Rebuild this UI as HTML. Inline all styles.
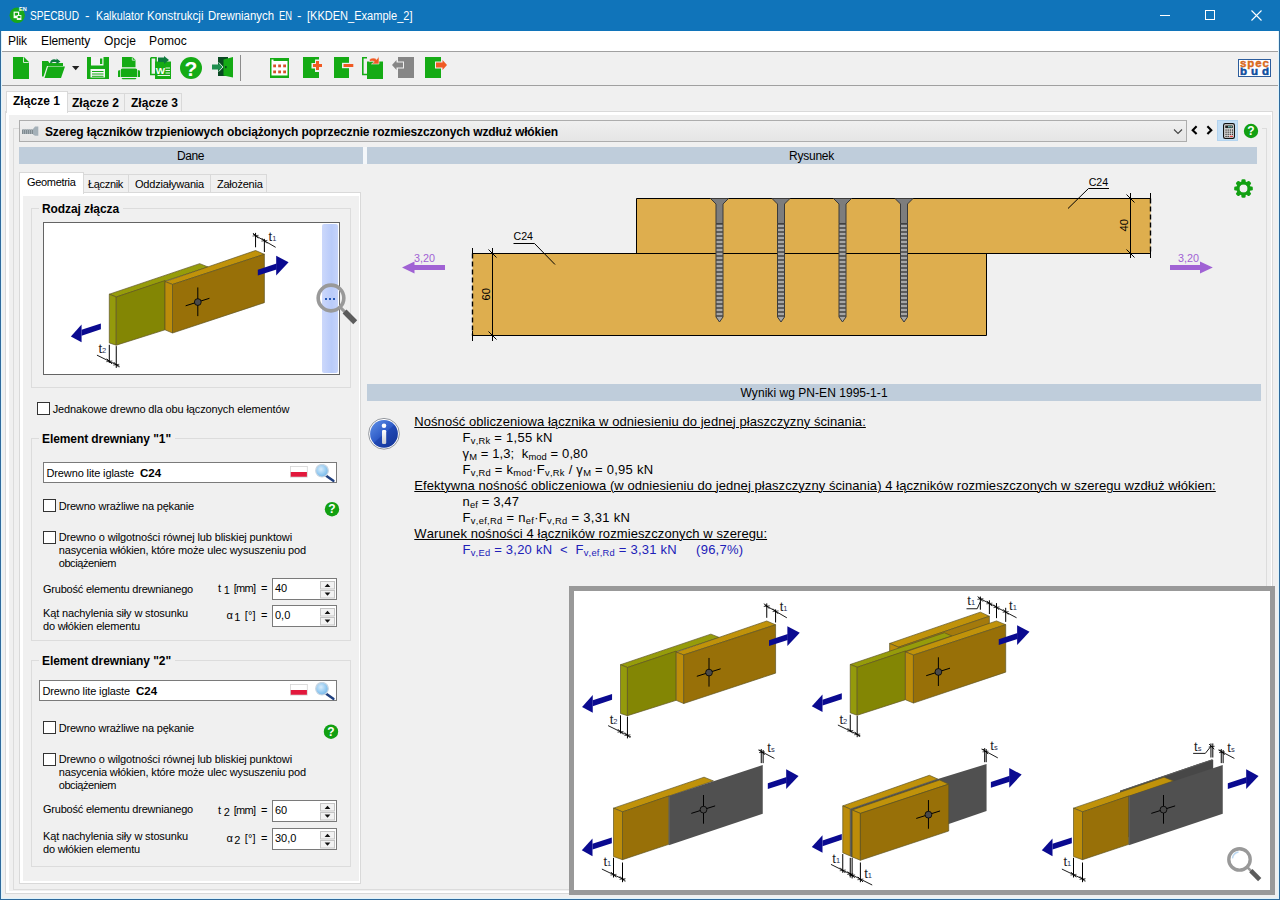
<!DOCTYPE html>
<html lang="pl"><head><meta charset="utf-8"><title>SPECBUD - Kalkulator Konstrukcji Drewnianych EN</title>
<style>
html,body{margin:0;padding:0;}
body{width:1280px;height:900px;overflow:hidden;background:#f0f0f0;position:relative;
 font-family:"Liberation Sans",sans-serif;font-size:11px;color:#000;font-kerning:none;}
.r{position:absolute;box-sizing:border-box;display:block;}
.t{position:absolute;white-space:pre;}
sub.s{font-size:72%;vertical-align:baseline;position:relative;top:2px;line-height:0;}
</style></head>
<body>
<div class="r" style="left:0px;top:0px;width:1280px;height:31px;background:#1074ba;"></div>
<span class="t " style="left:30px;top:8.00px;font-size:12px;line-height:16px;color:#fff;transform:scaleX(0.8446);transform-origin:0 0;">SPECBUD</span>
<span class="t " style="left:84.5px;top:8.00px;font-size:12px;line-height:16px;color:#fff;transform:scaleX(1.1262);transform-origin:0 0;">-</span>
<span class="t " style="left:95.5px;top:8.00px;font-size:12px;line-height:16px;color:#fff;transform:scaleX(0.8902);transform-origin:0 0;">Kalkulator</span>
<span class="t " style="left:147px;top:8.00px;font-size:12px;line-height:16px;color:#fff;transform:scaleX(0.9628);transform-origin:0 0;">Konstrukcji</span>
<span class="t " style="left:208px;top:8.00px;font-size:12px;line-height:16px;color:#fff;transform:scaleX(0.9516);transform-origin:0 0;">Drewnianych</span>
<span class="t " style="left:278.5px;top:8.00px;font-size:12px;line-height:16px;color:#fff;transform:scaleX(0.7798);transform-origin:0 0;">EN</span>
<span class="t " style="left:297px;top:8.00px;font-size:12px;line-height:16px;color:#fff;transform:scaleX(1.1262);transform-origin:0 0;">-</span>
<span class="t " style="left:307px;top:8.00px;font-size:12px;line-height:16px;color:#fff;transform:scaleX(0.9196);transform-origin:0 0;">[KKDEN_Example_2]</span>
<svg class="r" style="left:1150px;top:0px;" width="130" height="31" viewBox="0 0 130 31"><g stroke="#fff" stroke-width="1" fill="none" shape-rendering="crispEdges"><path d="M10 15.5H20"/><rect x="55.5" y="10.5" width="9" height="9"/></g><path d="M101.5 10.5l10 10M111.5 10.5l-10 10" stroke="#fff" stroke-width="1.1" fill="none"/></svg>
<div class="r" style="left:1px;top:31px;width:1278px;height:20px;background:#fff;"></div>
<span class="t " style="left:8px;top:33.00px;font-size:12px;line-height:16px;letter-spacing:-0.084px;">Plik</span>
<span class="t " style="left:41px;top:33.00px;font-size:12px;line-height:16px;letter-spacing:-0.127px;">Elementy</span>
<span class="t " style="left:104px;top:33.00px;font-size:12px;line-height:16px;letter-spacing:0.131px;">Opcje</span>
<span class="t " style="left:149px;top:33.00px;font-size:12px;line-height:16px;letter-spacing:0.131px;">Pomoc</span>
<div class="r" style="left:1px;top:51px;width:1278px;height:1px;background:#a0a0a0;"></div>
<div class="r" style="left:1px;top:85px;width:1278px;height:1px;background:#a0a0a0;"></div>
<div class="r" style="left:240px;top:55px;width:1px;height:26px;background:#8c8c8c;"></div>
<div class="r" style="left:5px;top:111px;width:1268px;height:783px;background:#fff;border:1px solid #d9d9d9;"></div>
<div class="r" style="left:9px;top:115px;width:1262px;height:776px;background:#f0f0f0;"></div>
<div class="r" style="left:67px;top:93px;width:58px;height:19px;background:#f0f0f0;border:1px solid #d9d9d9;"></div>
<div class="r" style="left:124px;top:93px;width:58px;height:19px;background:#f0f0f0;border:1px solid #d9d9d9;"></div>
<div class="r" style="left:6px;top:91px;width:62px;height:22px;background:#fff;border:1px solid #d9d9d9;border-bottom:none;"></div>
<span class="t " style="left:13px;top:93.00px;font-size:12px;line-height:16px;font-weight:bold;letter-spacing:0.039px;">Złącze 1</span>
<span class="t " style="left:72px;top:95.00px;font-size:12px;line-height:16px;font-weight:bold;letter-spacing:0.039px;">Złącze 2</span>
<span class="t " style="left:131px;top:95.00px;font-size:12px;line-height:16px;font-weight:bold;letter-spacing:0.039px;">Złącze 3</span>
<div class="r" style="left:13px;top:128px;width:1254px;height:762px;border:1px solid #dcdcdc;"></div>
<svg class="r" style="left:8px;top:5px;" width="20" height="20" viewBox="0 0 20 20"><circle cx="9.2" cy="10.3" r="7.7" fill="#18a818"/><rect x="5.6" y="6.6" width="5.6" height="6.6" fill="#fff"/><rect x="6.8" y="7.8" width="3.2" height="2.8" fill="#18a818"/><rect x="8.8" y="10" width="4.6" height="5" fill="#e9f6e9"/><rect x="9.8" y="11" width="2.6" height="2" fill="#18a818"/><text x="11" y="6" font-family="Liberation Sans,sans-serif" font-size="5.5" font-weight="bold" fill="#fff">EN</text></svg>
<svg class="r" style="left:0px;top:52px;" width="460" height="33" viewBox="0 52 460 33"><path d="M13 57H24L29 62V79H13Z" fill="#15ab15"/><path d="M23.5 57.3V62.5H28.7" fill="none" stroke="#e4f4e4" stroke-width="0.9"/><path d="M42 61H48L49.5 63H63V66H47L43.5 76.5H42Z" fill="#15ab15"/><path d="M48 66.5H65L61 78H44.5Z" fill="#15ab15"/><path d="M50 62.5C51 59.5 54 58.5 56.5 60V58.5L60.5 61.5L56.5 64V62.5C54.5 61.7 52.5 62 51 63.5Z" fill="#0d7a3c"/><path d="M72 66H79.4L75.7 70.2Z" fill="#222"/><path d="M87 57H109V79H87Z" fill="#15ab15"/><rect x="91" y="57" width="12.5" height="8.5" fill="#f4f4f4"/><rect x="100" y="58.5" width="2.3" height="5.5" fill="#15ab15"/><rect x="90.5" y="69" width="14.5" height="8.5" fill="#f4f4f4"/><path d="M92 71.5H103.5M92 74H103.5M92 76.3H103.5" stroke="#15ab15" stroke-width="1"/><path d="M122 57H132.5L135.5 60V67.3H122Z" fill="#15ab15"/><path d="M132.3 57.3V60.2H135.3" fill="none" stroke="#e4f4e4" stroke-width="0.8"/><path d="M122.5 68.6H135.5Q137.3 68.6 137.3 70.5V77H120.700V70.500Q120.700 68.600 122.500 68.600Z" fill="#15ab15"/><path d="M118 71.500Q118 70.300 119.200 70.300H120V77H118ZM138 70.300H138.800Q140 70.300 140 71.500V77H138Z" fill="#15ab15"/><path d="M121.500 77.900H136.500L135.500 79.300H122.500Z" fill="#15ab15"/><path d="M150.800 57.800H156V65M150.800 57.800V74.500H155" fill="none" stroke="#15ab15" stroke-width="1.6"/><rect x="155" y="61.500" width="16" height="17.500" fill="#15ab15"/><path d="M158 57.500H164V56L169 60L164 64V62H158Z" fill="#0d7a3c" transform="rotate(0)"/><path d="M157.5 75.500H170M165.500 68H170M165.500 70.500H170M165.500 73H170" stroke="#e8f6e8" stroke-width="1"/><text x="155.800" y="74.300" font-family="Liberation Sans,sans-serif" font-weight="bold" font-size="9.800" fill="#fff">W</text><circle cx="191" cy="68" r="11" fill="#15ab15"/><text x="191" y="75.800" font-family="Liberation Sans,sans-serif" font-weight="bold" font-size="21" fill="#fff" text-anchor="middle">?</text><rect x="218" y="57" width="10" height="19" fill="#0a4a22"/><path d="M223.500 59.500L233 57V77.500L223.500 75.500Z" fill="#15ab15"/><path d="M212 64.500H218.500V62L223.500 67L218.500 72V69.500H212Z" fill="#1f8f4f"/><path d="M218.800 62.500L223 67L218.800 71.500" fill="none" stroke="#e8f3e8" stroke-width="0.9"/><rect x="225" y="66" width="1.600" height="2.200" fill="#0a4a22"/><rect x="270" y="58" width="19" height="20" fill="#15ab15"/><path d="M271.500 59.500H273.500V61H287.500V75.500H271.500Z" fill="#fff"/><rect x="273.2" y="64.5" width="2.800" height="2.800" fill="#d8502a"/><rect x="278.2" y="64.5" width="2.800" height="2.800" fill="#d8502a"/><rect x="283.2" y="64.5" width="2.800" height="2.800" fill="#d8502a"/><rect x="273.2" y="70.5" width="2.800" height="2.800" fill="#d8502a"/><rect x="278.2" y="70.5" width="2.800" height="2.800" fill="#d8502a"/><rect x="283.2" y="70.5" width="2.800" height="2.800" fill="#d8502a"/><rect x="303" y="57" width="16" height="21" fill="#15ab15"/><path d="M311.500 63H315V59.500H320.500V63H324V68.500H320.500V72H315V68.500H311.500Z" fill="#f0f0f0"/><path d="M313 64H316V61H319V64H322V67H319V70H316V67H313Z" fill="#f05a23"/><rect x="334" y="57" width="15" height="21" fill="#15ab15"/><rect x="342" y="62.800" width="12" height="5.400" fill="#f0f0f0"/><rect x="343.500" y="64" width="9.800" height="3" fill="#f05a23"/><path d="M367 57.800H362.800V74.500H367" fill="none" stroke="#15ab15" stroke-width="1.600"/><rect x="367" y="61.500" width="16" height="17.500" fill="#15ab15"/><path d="M368 61.500V56.500H380V66H372Z" fill="#f0f0f0" opacity="0"/><path d="M369.500 59.500C372 57.500 375 57.800 376.500 59.500L379 56.500V64H371.500L374.300 61.800C373 60.800 371.500 60.800 369.500 61.800Z" fill="#f05a23" stroke="#f0f0f0" stroke-width="0.600"/><rect x="398" y="57" width="16" height="21" fill="#868686"/><path d="M391 65L397 58V61.500H404V68.500H397V72Z" fill="#f0f0f0"/><path d="M392 65L396.500 60V62.500H403V67.500H396.500V70Z" fill="#868686"/><rect x="425" y="57" width="16" height="21" fill="#15ab15"/><path d="M435 61.500H442V58L448 65L442 72V68.500H435Z" fill="#f0f0f0"/><path d="M436 62.500H442.500V60L447 65L442.500 70V67.500H436Z" fill="#f05a23"/></svg>
<svg class="r" style="left:1238px;top:59px;" width="33" height="18" viewBox="0 0 33 18"><rect x="0.5" y="0.5" width="32" height="17" fill="#fff" stroke="#2c5c9c"/><defs><clipPath id="lc"><rect x="0" y="8.6" width="33" height="8"/></clipPath></defs><g clip-path="url(#lc)"><text x="2" y="15.700" font-family="Liberation Sans,sans-serif" font-weight="bold" font-size="11.5" fill="#0d4f9e" stroke="#0d4f9e" stroke-width="0.500" textLength="29" lengthAdjust="spacing">bud</text></g><text x="2" y="8.400" font-family="Liberation Sans,sans-serif" font-weight="bold" font-size="11.5" fill="#e8701c" stroke="#c8601c" stroke-width="0.400" textLength="29" lengthAdjust="spacing">spec</text></svg>
<div class="r" style="left:19px;top:119px;width:1243px;height:24px;background:#f0f0f0;"></div>
<div class="r" style="left:19px;top:120px;width:1168px;height:22px;border:1px solid #adadad;background:linear-gradient(#f0f0f0,#e5e5e5);"></div>
<span class="t " style="left:45px;top:124.00px;font-size:12px;line-height:16px;font-weight:bold;letter-spacing:-0.130px;">Szereg łączników trzpieniowych obciążonych poprzecznie rozmieszczonych wzdłuż włókien</span>
<svg class="r" style="left:22px;top:125px;" width="18" height="12" viewBox="0 0 18 12"><rect x="0" y="4.5" width="11.5" height="4.500" fill="#7f8a90"/><path d="M1.5 4.500v4.500M3.500 4.500v4.500M5.500 4.500v4.500M7.500 4.500v4.500M9.500 4.500v4.500" stroke="#a3adb3" stroke-width="1"/><path d="M11 4L13 1.600H16.300V10.800H13L11 9.500Z" fill="#a4b0b8"/></svg>
<svg class="r" style="left:1172px;top:127px;" width="12" height="10" viewBox="0 0 12 10"><path d="M2 2.5L6 6.5L10 2.5" fill="none" stroke="#444" stroke-width="1.1"/></svg>
<div class="r" style="left:19px;top:147px;width:344px;height:17px;background:#bfcddb;"></div>
<div class="r" style="left:363px;top:147px;width:4px;height:17px;background:#f4f7fa;"></div>
<div class="r" style="left:367px;top:147px;width:890px;height:17px;background:#bfcddb;"></div>
<span class="t " style="left:177px;top:148.00px;font-size:12px;line-height:16px;letter-spacing:-0.421px;">Dane</span>
<span class="t " style="left:789px;top:148.00px;font-size:12px;line-height:16px;letter-spacing:-0.241px;">Rysunek</span>
<div class="r" style="left:19px;top:192px;width:342px;height:692px;background:#fff;border:1px solid #d9d9d9;"></div>
<div class="r" style="left:23px;top:196px;width:336px;height:685px;background:#f0f0f0;"></div>
<div class="r" style="left:83px;top:174px;width:46px;height:19px;background:#f0f0f0;border:1px solid #d9d9d9;"></div>
<div class="r" style="left:128px;top:174px;width:83px;height:19px;background:#f0f0f0;border:1px solid #d9d9d9;"></div>
<div class="r" style="left:210px;top:174px;width:57px;height:19px;background:#f0f0f0;border:1px solid #d9d9d9;"></div>
<div class="r" style="left:19px;top:172px;width:65px;height:22px;background:#fff;border:1px solid #d9d9d9;border-bottom:none;"></div>
<span class="t " style="left:27px;top:175.00px;font-size:11px;line-height:14px;letter-spacing:-0.317px;">Geometria</span>
<span class="t " style="left:88px;top:177.00px;font-size:11px;line-height:14px;letter-spacing:-0.328px;">Łącznik</span>
<span class="t " style="left:135px;top:177.00px;font-size:11px;line-height:14px;letter-spacing:-0.195px;">Oddziaływania</span>
<span class="t " style="left:217px;top:177.00px;font-size:11px;line-height:14px;letter-spacing:-0.244px;">Założenia</span>
<div class="r" style="left:31px;top:208px;width:320px;height:180px;border:1px solid #dcdcdc;"></div>
<div class="r" style="left:39px;top:202px;width:84px;height:14px;background:#f0f0f0;"></div>
<span class="t " style="left:42px;top:201.00px;font-size:12px;line-height:16px;font-weight:bold;letter-spacing:-0.078px;">Rodzaj złącza</span>
<div class="r" style="left:43px;top:222px;width:297px;height:153px;background:#fff;border:1px solid #646464;"></div>
<div class="r" style="left:322px;top:224px;width:16px;height:149px;background:linear-gradient(90deg,#ccd8fb,#b9cbfa 60%,#c6d4fb);border-radius:2px;"></div>
<div class="r" style="left:37px;top:402px;width:13px;height:13px;background:#fff;border:1px solid #333;"></div>
<span class="t " style="left:52.7px;top:402.00px;font-size:11px;line-height:14px;letter-spacing:-0.128px;">Jednakowe drewno dla obu łączonych elementów</span>
<div class="r" style="left:31px;top:438px;width:320px;height:203px;border:1px solid #dcdcdc;"></div>
<div class="r" style="left:39px;top:432px;width:136px;height:14px;background:#f0f0f0;"></div>
<span class="t " style="left:42px;top:431.00px;font-size:12px;line-height:16px;font-weight:bold;letter-spacing:-0.083px;">Element drewniany &quot;1&quot;</span>
<div class="r" style="left:43px;top:462px;width:294px;height:21px;background:#fff;border:1px solid #7a7a7a;"></div>
<span class="t " style="left:46.5px;top:466.00px;font-size:11px;line-height:14px;letter-spacing:-0.125px;">Drewno lite iglaste</span>
<span class="t " style="left:140px;top:466.00px;font-size:11.5px;line-height:14px;font-weight:bold;letter-spacing:-0.032px;">C24</span>
<svg class="r" style="left:290px;top:466px;" width="18" height="12" viewBox="0 0 18 12"><rect x="0" y="0" width="17.7" height="11.5" fill="#d4d4d4"/><rect x="0.8" y="0.8" width="16.100" height="5.200" fill="#fff"/><rect x="0.800" y="6" width="16.100" height="4.700" fill="#e2183c"/></svg>
<svg class="r" style="left:314px;top:464px;" width="21" height="19" viewBox="0 0 21 19"><defs><radialGradient id="mg1" cx="42%" cy="38%" r="65%"><stop offset="0" stop-color="#d8ecfb"/><stop offset="0.7" stop-color="#8cc6f0"/><stop offset="1" stop-color="#7ab4e4"/></radialGradient></defs><path d="M12.5 12L19.3 16.800" stroke="#1f3f7f" stroke-width="2.600" stroke-linecap="round"/><circle cx="8" cy="6.700" r="6.300" fill="url(#mg1)" stroke="#c9d6e2" stroke-width="1.200"/></svg>
<div class="r" style="left:43px;top:499px;width:13px;height:13px;background:#fff;border:1px solid #333;"></div>
<span class="t " style="left:58.7px;top:499.00px;font-size:11px;line-height:14px;letter-spacing:-0.181px;">Drewno wrażliwe na pękanie</span>
<svg class="r" style="left:323px;top:500px;" width="18" height="18" viewBox="0 0 18 18"><circle cx="9" cy="9.199999999999989" r="7.2" fill="#12a012"/><text x="9" y="13.399999999999988" font-family="Liberation Sans,sans-serif" font-weight="bold" font-size="12" fill="#fff" text-anchor="middle">?</text></svg>
<div class="r" style="left:43px;top:531px;width:13px;height:13px;background:#fff;border:1px solid #333;"></div>
<span class="t " style="left:58.7px;top:530.00px;font-size:11px;line-height:14px;letter-spacing:-0.130px;">Drewno o wilgotności równej lub bliskiej punktowi</span>
<span class="t " style="left:58.7px;top:543.00px;font-size:11px;line-height:14px;letter-spacing:-0.144px;">nasycenia włókien, które może ulec wysuszeniu pod</span>
<span class="t " style="left:58.7px;top:556.00px;font-size:11px;line-height:14px;letter-spacing:-0.405px;">obciążeniem</span>
<span class="t " style="left:43px;top:582.00px;font-size:11px;line-height:14px;letter-spacing:-0.211px;">Grubość elementu drewnianego</span>
<span class="t " style="left:218px;top:581.00px;font-size:11px;line-height:14px;">t</span>
<span class="t " style="left:223.7px;top:583.00px;font-size:11px;line-height:14px;">1</span>
<span class="t " style="left:233.7px;top:581.00px;font-size:11px;line-height:14px;letter-spacing:-0.684px;">[mm]</span>
<span class="t " style="left:261px;top:581.00px;font-size:11px;line-height:14px;">=</span>
<div class="r" style="left:272px;top:578px;width:65px;height:22px;background:#fff;border:1px solid #7a7a7a;"></div>
<span class="t " style="left:275px;top:581.00px;font-size:11px;line-height:14px;">40</span>
<svg class="r" style="left:320px;top:581px;" width="15" height="18" viewBox="0 0 15 18"><rect x="0.5" y="0.5" width="14" height="7.5" fill="#f2f2f2" stroke="#c4c4c4"/><rect x="0.5" y="9.5" width="14" height="7.5" fill="#f2f2f2" stroke="#c4c4c4"/><path d="M4.6 6L7.5 2.8L10.4 6Z" fill="#111"/><path d="M4.6 11.6L7.5 14.8L10.4 11.6Z" fill="#111"/></svg>
<span class="t " style="left:43px;top:606.00px;font-size:11px;line-height:14px;letter-spacing:-0.139px;">Kąt nachylenia siły w stosunku</span>
<span class="t " style="left:43px;top:619.00px;font-size:11px;line-height:14px;letter-spacing:-0.172px;">do włókien elementu</span>
<span class="t " style="left:226.5px;top:608.00px;font-size:11px;line-height:14px;">α</span>
<span class="t " style="left:234.3px;top:610.00px;font-size:11px;line-height:14px;">1</span>
<span class="t " style="left:244.8px;top:608.00px;font-size:11px;line-height:14px;letter-spacing:0.063px;">[°]</span>
<span class="t " style="left:261px;top:608.00px;font-size:11px;line-height:14px;">=</span>
<div class="r" style="left:272px;top:605px;width:65px;height:22px;background:#fff;border:1px solid #7a7a7a;"></div>
<span class="t " style="left:275px;top:608.00px;font-size:11px;line-height:14px;">0,0</span>
<svg class="r" style="left:320px;top:608px;" width="15" height="18" viewBox="0 0 15 18"><rect x="0.5" y="0.5" width="14" height="7.5" fill="#f2f2f2" stroke="#c4c4c4"/><rect x="0.5" y="9.5" width="14" height="7.5" fill="#f2f2f2" stroke="#c4c4c4"/><path d="M4.6 6L7.5 2.8L10.4 6Z" fill="#111"/><path d="M4.6 11.6L7.5 14.8L10.4 11.6Z" fill="#111"/></svg>
<div class="r" style="left:31px;top:660px;width:320px;height:207px;border:1px solid #dcdcdc;"></div>
<div class="r" style="left:39px;top:654px;width:136px;height:14px;background:#f0f0f0;"></div>
<span class="t " style="left:42px;top:653.00px;font-size:12px;line-height:16px;font-weight:bold;letter-spacing:-0.083px;">Element drewniany &quot;2&quot;</span>
<div class="r" style="left:39px;top:680px;width:298px;height:21px;background:#fff;border:1px solid #7a7a7a;"></div>
<span class="t " style="left:42.5px;top:684.00px;font-size:11px;line-height:14px;letter-spacing:-0.125px;">Drewno lite iglaste</span>
<span class="t " style="left:136px;top:684.00px;font-size:11.5px;line-height:14px;font-weight:bold;letter-spacing:-0.032px;">C24</span>
<svg class="r" style="left:290px;top:684px;" width="18" height="12" viewBox="0 0 18 12"><rect x="0" y="0" width="17.7" height="11.5" fill="#d4d4d4"/><rect x="0.8" y="0.8" width="16.100" height="5.200" fill="#fff"/><rect x="0.800" y="6" width="16.100" height="4.700" fill="#e2183c"/></svg>
<svg class="r" style="left:314px;top:682px;" width="21" height="19" viewBox="0 0 21 19"><defs><radialGradient id="mg2" cx="42%" cy="38%" r="65%"><stop offset="0" stop-color="#d8ecfb"/><stop offset="0.7" stop-color="#8cc6f0"/><stop offset="1" stop-color="#7ab4e4"/></radialGradient></defs><path d="M12.5 12L19.3 16.800" stroke="#1f3f7f" stroke-width="2.600" stroke-linecap="round"/><circle cx="8" cy="6.700" r="6.300" fill="url(#mg2)" stroke="#c9d6e2" stroke-width="1.200"/></svg>
<div class="r" style="left:43px;top:721px;width:13px;height:13px;background:#fff;border:1px solid #333;"></div>
<span class="t " style="left:58.7px;top:721.00px;font-size:11px;line-height:14px;letter-spacing:-0.181px;">Drewno wrażliwe na pękanie</span>
<svg class="r" style="left:322px;top:723px;" width="18" height="18" viewBox="0 0 18 18"><circle cx="9" cy="8.700000000000045" r="7.2" fill="#12a012"/><text x="9" y="12.900000000000045" font-family="Liberation Sans,sans-serif" font-weight="bold" font-size="12" fill="#fff" text-anchor="middle">?</text></svg>
<div class="r" style="left:43px;top:753px;width:13px;height:13px;background:#fff;border:1px solid #333;"></div>
<span class="t " style="left:58.7px;top:752.00px;font-size:11px;line-height:14px;letter-spacing:-0.130px;">Drewno o wilgotności równej lub bliskiej punktowi</span>
<span class="t " style="left:58.7px;top:765.00px;font-size:11px;line-height:14px;letter-spacing:-0.144px;">nasycenia włókien, które może ulec wysuszeniu pod</span>
<span class="t " style="left:58.7px;top:778.00px;font-size:11px;line-height:14px;letter-spacing:-0.405px;">obciążeniem</span>
<span class="t " style="left:43px;top:802.00px;font-size:11px;line-height:14px;letter-spacing:-0.211px;">Grubość elementu drewnianego</span>
<span class="t " style="left:218px;top:803.00px;font-size:11px;line-height:14px;">t</span>
<span class="t " style="left:223.7px;top:805.00px;font-size:11px;line-height:14px;">2</span>
<span class="t " style="left:233.7px;top:803.00px;font-size:11px;line-height:14px;letter-spacing:-0.684px;">[mm]</span>
<span class="t " style="left:261px;top:803.00px;font-size:11px;line-height:14px;">=</span>
<div class="r" style="left:272px;top:800px;width:65px;height:22px;background:#fff;border:1px solid #7a7a7a;"></div>
<span class="t " style="left:275px;top:803.00px;font-size:11px;line-height:14px;">60</span>
<svg class="r" style="left:320px;top:803px;" width="15" height="18" viewBox="0 0 15 18"><rect x="0.5" y="0.5" width="14" height="7.5" fill="#f2f2f2" stroke="#c4c4c4"/><rect x="0.5" y="9.5" width="14" height="7.5" fill="#f2f2f2" stroke="#c4c4c4"/><path d="M4.6 6L7.5 2.8L10.4 6Z" fill="#111"/><path d="M4.6 11.6L7.5 14.8L10.4 11.6Z" fill="#111"/></svg>
<span class="t " style="left:43px;top:829.00px;font-size:11px;line-height:14px;letter-spacing:-0.139px;">Kąt nachylenia siły w stosunku</span>
<span class="t " style="left:43px;top:842.00px;font-size:11px;line-height:14px;letter-spacing:-0.172px;">do włókien elementu</span>
<span class="t " style="left:226.5px;top:831.00px;font-size:11px;line-height:14px;">α</span>
<span class="t " style="left:234.3px;top:833.00px;font-size:11px;line-height:14px;">2</span>
<span class="t " style="left:244.8px;top:831.00px;font-size:11px;line-height:14px;letter-spacing:0.063px;">[°]</span>
<span class="t " style="left:261px;top:831.00px;font-size:11px;line-height:14px;">=</span>
<div class="r" style="left:272px;top:828px;width:65px;height:22px;background:#fff;border:1px solid #7a7a7a;"></div>
<span class="t " style="left:275px;top:831.00px;font-size:11px;line-height:14px;">30,0</span>
<svg class="r" style="left:320px;top:831px;" width="15" height="18" viewBox="0 0 15 18"><rect x="0.5" y="0.5" width="14" height="7.5" fill="#f2f2f2" stroke="#c4c4c4"/><rect x="0.5" y="9.5" width="14" height="7.5" fill="#f2f2f2" stroke="#c4c4c4"/><path d="M4.6 6L7.5 2.8L10.4 6Z" fill="#111"/><path d="M4.6 11.6L7.5 14.8L10.4 11.6Z" fill="#111"/></svg>
<svg class="r" style="left:367px;top:165px;" width="895" height="217" viewBox="0 0 895 217"><g transform="translate(-367,-165)"><rect x="636.5" y="198.5" width="514" height="55" fill="#deae4e"/><rect x="472.5" y="253.5" width="514" height="82" fill="#deae4e"/><g stroke="#000" stroke-width="1" fill="none"><path d="M636.5 253.5V198.5H1150.5M472.5 253.5H1150.5M472.5 335.5H986.5V253.5"/><path d="M472.5 253.5V335.5M1150.5 198.5V253.5" stroke-dasharray="5 3" stroke-width="1.4"/><path d="M472.5 248V258M472.5 331V341M492.5 248V341M488.5 249.5l8 8M488.5 331.5l8 8"/><path d="M1150.5 193V203M1150.5 249V258M1130.5 193V258M1126.5 194.5l8 8M1126.5 249.5l8 8"/><path d="M513.5 243.5H534.5L555 264.5M1109 188.5H1088.5L1068 208.5"/></g><path d="M710.5 198.5H728.5L723.0 204V223.5H716.0V204Z" fill="#7d7d7d" stroke="#3a3a3a" stroke-width="1"/><path d="M716.0 223.5H723.0V317L719.5 322L716.0 317Z" fill="#a6a6a6" stroke="#3a3a3a" stroke-width="1"/><path d="M716.0 224.0H723.0M716.0 228.0H723.0M716.0 232.0H723.0M716.0 236.0H723.0M716.0 240.0H723.0M716.0 244.0H723.0M716.0 248.0H723.0M716.0 252.0H723.0M716.0 256.0H723.0M716.0 260.0H723.0M716.0 264.0H723.0M716.0 268.0H723.0M716.0 272.0H723.0M716.0 276.0H723.0M716.0 280.0H723.0M716.0 284.0H723.0M716.0 288.0H723.0M716.0 292.0H723.0M716.0 296.0H723.0M716.0 300.0H723.0M716.0 304.0H723.0M716.0 308.0H723.0M716.0 312.0H723.0M716.0 316.0H723.0" stroke="#444" stroke-width="1.3"/><path d="M772 198.5H790L784.5 204V223.5H777.5V204Z" fill="#7d7d7d" stroke="#3a3a3a" stroke-width="1"/><path d="M777.5 223.5H784.5V317L781 322L777.5 317Z" fill="#a6a6a6" stroke="#3a3a3a" stroke-width="1"/><path d="M777.5 224.0H784.5M777.5 228.0H784.5M777.5 232.0H784.5M777.5 236.0H784.5M777.5 240.0H784.5M777.5 244.0H784.5M777.5 248.0H784.5M777.5 252.0H784.5M777.5 256.0H784.5M777.5 260.0H784.5M777.5 264.0H784.5M777.5 268.0H784.5M777.5 272.0H784.5M777.5 276.0H784.5M777.5 280.0H784.5M777.5 284.0H784.5M777.5 288.0H784.5M777.5 292.0H784.5M777.5 296.0H784.5M777.5 300.0H784.5M777.5 304.0H784.5M777.5 308.0H784.5M777.5 312.0H784.5M777.5 316.0H784.5" stroke="#444" stroke-width="1.3"/><path d="M833.5 198.5H851.5L846.0 204V223.5H839.0V204Z" fill="#7d7d7d" stroke="#3a3a3a" stroke-width="1"/><path d="M839.0 223.5H846.0V317L842.5 322L839.0 317Z" fill="#a6a6a6" stroke="#3a3a3a" stroke-width="1"/><path d="M839.0 224.0H846.0M839.0 228.0H846.0M839.0 232.0H846.0M839.0 236.0H846.0M839.0 240.0H846.0M839.0 244.0H846.0M839.0 248.0H846.0M839.0 252.0H846.0M839.0 256.0H846.0M839.0 260.0H846.0M839.0 264.0H846.0M839.0 268.0H846.0M839.0 272.0H846.0M839.0 276.0H846.0M839.0 280.0H846.0M839.0 284.0H846.0M839.0 288.0H846.0M839.0 292.0H846.0M839.0 296.0H846.0M839.0 300.0H846.0M839.0 304.0H846.0M839.0 308.0H846.0M839.0 312.0H846.0M839.0 316.0H846.0" stroke="#444" stroke-width="1.3"/><path d="M895 198.5H913L907.5 204V223.5H900.5V204Z" fill="#7d7d7d" stroke="#3a3a3a" stroke-width="1"/><path d="M900.5 223.5H907.5V317L904 322L900.5 317Z" fill="#a6a6a6" stroke="#3a3a3a" stroke-width="1"/><path d="M900.5 224.0H907.5M900.5 228.0H907.5M900.5 232.0H907.5M900.5 236.0H907.5M900.5 240.0H907.5M900.5 244.0H907.5M900.5 248.0H907.5M900.5 252.0H907.5M900.5 256.0H907.5M900.5 260.0H907.5M900.5 264.0H907.5M900.5 268.0H907.5M900.5 272.0H907.5M900.5 276.0H907.5M900.5 280.0H907.5M900.5 284.0H907.5M900.5 288.0H907.5M900.5 292.0H907.5M900.5 296.0H907.5M900.5 300.0H907.5M900.5 304.0H907.5M900.5 308.0H907.5M900.5 312.0H907.5M900.5 316.0H907.5" stroke="#444" stroke-width="1.3"/><path d="M402 267.5L414.5 261.5V265H445V270H414.5V273.5Z" fill="#a062d4"/><path d="M1212.8 267.5L1200 261.5V265H1170V270H1200V273.5Z" fill="#a062d4"/><text x="414" y="262" font-family="Liberation Sans,sans-serif" font-size="11" fill="#a062d4" textLength="21" lengthAdjust="spacingAndGlyphs">3,20</text><text x="1178" y="262" font-family="Liberation Sans,sans-serif" font-size="11" fill="#a062d4" textLength="21" lengthAdjust="spacingAndGlyphs">3,20</text><text x="513.5" y="240.2" font-family="Liberation Sans,sans-serif" font-size="11" textLength="19.5" lengthAdjust="spacingAndGlyphs">C24</text><text x="1088.7" y="185.8" font-family="Liberation Sans,sans-serif" font-size="11" textLength="19.5" lengthAdjust="spacingAndGlyphs">C24</text><text transform="translate(489.5,300.5) rotate(-90)" font-family="Liberation Sans,sans-serif" font-size="11" textLength="12.5" lengthAdjust="spacingAndGlyphs">60</text><text transform="translate(1127.5,231.5) rotate(-90)" font-family="Liberation Sans,sans-serif" font-size="11" textLength="12.5" lengthAdjust="spacingAndGlyphs">40</text></g></svg>
<svg class="r" style="left:1234px;top:179px;" width="19" height="19" viewBox="0 0 19 19"><rect x="7.4" y="0.1999999999999993" width="4.2" height="5" rx="1.3" fill="#12a012" transform="rotate(0 9.5 9.5)"/><rect x="7.4" y="0.1999999999999993" width="4.2" height="5" rx="1.3" fill="#12a012" transform="rotate(45 9.5 9.5)"/><rect x="7.4" y="0.1999999999999993" width="4.2" height="5" rx="1.3" fill="#12a012" transform="rotate(90 9.5 9.5)"/><rect x="7.4" y="0.1999999999999993" width="4.2" height="5" rx="1.3" fill="#12a012" transform="rotate(135 9.5 9.5)"/><rect x="7.4" y="0.1999999999999993" width="4.2" height="5" rx="1.3" fill="#12a012" transform="rotate(180 9.5 9.5)"/><rect x="7.4" y="0.1999999999999993" width="4.2" height="5" rx="1.3" fill="#12a012" transform="rotate(225 9.5 9.5)"/><rect x="7.4" y="0.1999999999999993" width="4.2" height="5" rx="1.3" fill="#12a012" transform="rotate(270 9.5 9.5)"/><rect x="7.4" y="0.1999999999999993" width="4.2" height="5" rx="1.3" fill="#12a012" transform="rotate(315 9.5 9.5)"/><circle cx="9.5" cy="9.5" r="5.6" fill="none" stroke="#12a012" stroke-width="3.2"/></svg>
<div class="r" style="left:367px;top:384px;width:894px;height:17px;background:#bfcddb;"></div>
<span class="t " style="left:740.5px;top:385.00px;font-size:12px;line-height:16px;letter-spacing:0.044px;">Wyniki wg PN-EN 1995-1-1</span>
<svg class="r" style="left:367px;top:417px;" width="34" height="34" viewBox="0 0 34 34"><defs><linearGradient id="ig" x1="0.150" y1="0.100" x2="0.850" y2="0.900"><stop offset="0" stop-color="#5585e0"/><stop offset="0.480" stop-color="#2f5cc8"/><stop offset="0.520" stop-color="#2048b4"/><stop offset="1" stop-color="#16389c"/></linearGradient><linearGradient id="ih" x1="0" y1="0" x2="0" y2="1"><stop offset="0" stop-color="#fff"/><stop offset="1" stop-color="#c8ccd4"/></linearGradient></defs><circle cx="17" cy="16.800" r="15.400" fill="#fff" stroke="#888c94" stroke-width="0.900"/><circle cx="17" cy="16.800" r="13.900" fill="url(#ig)"/><circle cx="17" cy="8.700" r="2.300" fill="#fff"/><rect x="15" y="13" width="4.200" height="14" rx="1.200" fill="url(#ih)"/></svg>
<span class="t " style="left:414.3px;top:413.00px;font-size:13px;line-height:17px;letter-spacing:0.066px;text-decoration:underline;text-underline-offset:1.2px;text-decoration-thickness:1px;">Nośność obliczeniowa łącznika w odniesieniu do jednej płaszczyzny ścinania:</span>
<span class="t " style="left:414.3px;top:477.00px;font-size:13px;line-height:17px;letter-spacing:0.062px;text-decoration:underline;text-underline-offset:1.2px;text-decoration-thickness:1px;">Efektywna nośność obliczeniowa (w odniesieniu do jednej płaszczyzny ścinania) 4 łączników rozmieszczonych w szeregu wzdłuż włókien:</span>
<span class="t " style="left:414.3px;top:525.00px;font-size:13px;line-height:17px;letter-spacing:0.096px;text-decoration:underline;text-underline-offset:1.2px;text-decoration-thickness:1px;">Warunek nośności 4 łączników rozmieszczonych w szeregu:</span>
<span class="t " style="left:462.5px;top:429.00px;font-size:13px;line-height:17px;letter-spacing:0.261px;">F<sub class="s">v,Rk</sub> = 1,55 kN</span>
<span class="t " style="left:462.5px;top:445.00px;font-size:13px;line-height:17px;letter-spacing:0.112px;">γ<sub class="s">M</sub> = 1,3;  k<sub class="s">mod</sub> = 0,80</span>
<span class="t " style="left:462.5px;top:461.00px;font-size:13px;line-height:17px;letter-spacing:0.256px;">F<sub class="s">v,Rd</sub> = k<sub class="s">mod</sub>·F<sub class="s">v,Rk</sub> / γ<sub class="s">M</sub> = 0,95 kN</span>
<span class="t " style="left:462.5px;top:493.00px;font-size:13px;line-height:17px;letter-spacing:0.135px;">n<sub class="s">ef</sub> = 3,47</span>
<span class="t " style="left:462.5px;top:509.00px;font-size:13px;line-height:17px;letter-spacing:0.304px;">F<sub class="s">v,ef,Rd</sub> = n<sub class="s">ef</sub>·F<sub class="s">v,Rd</sub> = 3,31 kN</span>
<span class="t " style="left:462.5px;top:541.00px;font-size:13px;line-height:17px;color:#2020b8;letter-spacing:0.234px;">F<sub class="s">v,Ed</sub> = 3,20 kN  &lt;  F<sub class="s">v,ef,Rd</sub> = 3,31 kN     (96,7%)</span>
<svg class="r" style="left:1189px;top:124px;" width="26" height="14" viewBox="0 0 26 14"><path d="M7.6 2.3L3.7 6.2L7.6 10.100M18.400 2.300L22.300 6.200L18.400 10.100" fill="none" stroke="#000" stroke-width="2.100"/></svg>
<div class="r" style="left:1217px;top:120px;width:21px;height:21px;background:#c4dff6;border:1px solid #b3d4f0;"></div>
<svg class="r" style="left:1222.5px;top:122.5px;" width="12" height="16" viewBox="0 0 12 16"><rect x="0.600" y="0.600" width="10.800" height="14.800" rx="1.600" fill="#f2f2f2" stroke="#111" stroke-width="1.200"/><rect x="2.200" y="2.400" width="7.600" height="2.800" fill="#222"/><rect x="5" y="3.200" width="1.800" height="1.200" fill="#7fd8d0"/><rect x="7.400" y="3.200" width="1.600" height="1.200" fill="#7fd8d0"/><rect x="2.4" y="6.4" width="1.300" height="1.300" fill="#222"/><rect x="4.5" y="6.4" width="1.300" height="1.300" fill="#222"/><rect x="6.6" y="6.4" width="1.300" height="1.300" fill="#222"/><rect x="8.7" y="6.4" width="1.300" height="1.300" fill="#222"/><rect x="2.4" y="8.5" width="1.300" height="1.300" fill="#222"/><rect x="4.5" y="8.5" width="1.300" height="1.300" fill="#222"/><rect x="6.6" y="8.5" width="1.300" height="1.300" fill="#222"/><rect x="8.7" y="8.5" width="1.300" height="1.300" fill="#222"/><rect x="2.4" y="10.6" width="1.300" height="1.300" fill="#222"/><rect x="4.5" y="10.6" width="1.300" height="1.300" fill="#222"/><rect x="6.6" y="10.6" width="1.300" height="1.300" fill="#222"/><rect x="8.7" y="10.6" width="1.300" height="1.300" fill="#222"/><rect x="2.4" y="12.7" width="1.300" height="1.300" fill="#222"/><rect x="4.5" y="12.7" width="1.300" height="1.300" fill="#222"/><rect x="6.600" y="12.700" width="3.400" height="1.300" fill="#d84040"/></svg>
<svg class="r" style="left:1242px;top:122px;" width="18" height="18" viewBox="0 0 18 18"><circle cx="9" cy="9" r="7.2" fill="#12a012"/><text x="9" y="13.2" font-family="Liberation Sans,sans-serif" font-weight="bold" font-size="12" fill="#fff" text-anchor="middle">?</text></svg>
<svg class="r" style="left:60px;top:223px;" width="262" height="151" viewBox="0 1 262 151"><polygon points="49.31,72.19 139.69,41.63 148.13,45.00 56.25,75.00" fill="#969c0a" stroke="#5f5424" stroke-width="0.7" stroke-linejoin="round"/><polygon points="49.31,72.19 56.25,75.00 56.25,123.19 49.31,120.94" fill="#949a0c" stroke="#5f5424" stroke-width="0.7" stroke-linejoin="round"/><polygon points="56.25,75.00 105.00,58.50 105.00,107.81 56.25,123.19" fill="#838604" stroke="#5f5424" stroke-width="0.7" stroke-linejoin="round"/><polygon points="105.00,59.63 195.56,28.50 204.38,32.25 112.50,62.44" fill="#c0920a" stroke="#5f5424" stroke-width="0.7" stroke-linejoin="round"/><polygon points="105.00,59.63 112.50,62.44 112.50,111.00 105.00,107.81" fill="#bc8c0a" stroke="#5f5424" stroke-width="0.7" stroke-linejoin="round"/><polygon points="112.50,62.44 204.38,32.25 204.38,80.63 112.50,111.00" fill="#987008" stroke="#5f5424" stroke-width="0.7" stroke-linejoin="round"/><path d="M125.63 83.81 L149.44 76.31" stroke="#000" stroke-width="1.0" fill="none"/><path d="M137.81 65.44 L137.81 94.13" stroke="#000" stroke-width="1.0" fill="none"/><circle cx="137.81" cy="80.06" r="3.4" fill="#4a4a4a" stroke="#000" stroke-width="0.8"/><polygon points="197.81,47.63 216.56,41.44 216.56,47.44 197.81,53.44" fill="#0a0a90"/><polygon points="216.19,33.75 228.56,40.31 216.19,53.44" fill="#0a0a90"/><polygon points="21.56,107.81 40.88,101.44 40.88,107.25 21.56,113.63" fill="#0a0a90"/><polygon points="10.88,114.38 21.56,102.56 21.56,120.19" fill="#0a0a90"/><path d="M195.56 10.88 L195.56 25.31" stroke="#000" stroke-width="1.0" fill="none"/><path d="M204.38 16.88 L204.38 30.00" stroke="#000" stroke-width="1.0" fill="none"/><path d="M193.13 12.19 L215.63 25.31" stroke="#000" stroke-width="0.9" fill="none"/><path d="M192.94 11.06 L198.19 16.31" stroke="#000" stroke-width="0.9" fill="none"/><path d="M192.56 14.06 L198.56 13.31" stroke="#000" stroke-width="0.7" fill="none"/><path d="M201.75 16.13 L207.00 21.38" stroke="#000" stroke-width="0.9" fill="none"/><path d="M201.38 19.13 L207.38 18.38" stroke="#000" stroke-width="0.7" fill="none"/><text x="208.50" y="18.75" font-family="Liberation Sans,sans-serif" font-size="13" fill="#222">t<tspan font-size="7.5" fill="#2a3050" dy="0">1</tspan></text><path d="M49.31 122.81 L49.31 141.00" stroke="#000" stroke-width="1.0" fill="none"/><path d="M56.25 124.13 L56.25 145.88" stroke="#000" stroke-width="1.0" fill="none"/><path d="M36.94 133.13 L59.63 144.38" stroke="#000" stroke-width="0.9" fill="none"/><path d="M46.69 136.69 L51.94 141.94" stroke="#000" stroke-width="0.9" fill="none"/><path d="M46.31 139.69 L52.31 138.94" stroke="#000" stroke-width="0.7" fill="none"/><path d="M53.63 140.06 L58.88 145.31" stroke="#000" stroke-width="0.9" fill="none"/><path d="M53.25 143.06 L59.25 142.31" stroke="#000" stroke-width="0.7" fill="none"/><text x="38.44" y="131.25" font-family="Liberation Sans,sans-serif" font-size="13" fill="#222">t<tspan font-size="7.5" fill="#2a3050" dy="0">2</tspan></text></svg>
<svg class="r" style="left:314px;top:281px;" width="48" height="46" viewBox="0 0 48 46"><path d="M26.00 26.00L32.60 32.60" stroke="#999" stroke-width="3.12"/><path d="M30.56 30.56L41.24 41.24" stroke="#5c5c5c" stroke-width="5.52"/><circle cx="17" cy="17" r="12.84" fill="none" stroke="#999" stroke-width="3.6"/><g fill="#2458b8"><rect x="11" y="17" width="2" height="2"/><rect x="15" y="17" width="2" height="2"/><rect x="19" y="17" width="2" height="2"/></g></svg>
<div class="r" style="left:569px;top:586px;width:706px;height:309px;background:#fff;border:5px solid #999;"></div>
<svg class="r" style="left:574px;top:591px;" width="696" height="299" viewBox="0 0 696 299"><g transform="translate(-2.80,1.50)"><polygon points="49.31,72.19 139.69,41.63 148.13,45.00 56.25,75.00" fill="#969c0a" stroke="#5f5424" stroke-width="0.7" stroke-linejoin="round"/><polygon points="49.31,72.19 56.25,75.00 56.25,123.19 49.31,120.94" fill="#949a0c" stroke="#5f5424" stroke-width="0.7" stroke-linejoin="round"/><polygon points="56.25,75.00 105.00,58.50 105.00,107.81 56.25,123.19" fill="#838604" stroke="#5f5424" stroke-width="0.7" stroke-linejoin="round"/><polygon points="105.00,59.63 195.56,28.50 204.38,32.25 112.50,62.44" fill="#c0920a" stroke="#5f5424" stroke-width="0.7" stroke-linejoin="round"/><polygon points="105.00,59.63 112.50,62.44 112.50,111.00 105.00,107.81" fill="#bc8c0a" stroke="#5f5424" stroke-width="0.7" stroke-linejoin="round"/><polygon points="112.50,62.44 204.38,32.25 204.38,80.63 112.50,111.00" fill="#987008" stroke="#5f5424" stroke-width="0.7" stroke-linejoin="round"/><path d="M125.63 83.81 L149.44 76.31" stroke="#000" stroke-width="1.0" fill="none"/><path d="M137.81 65.44 L137.81 94.13" stroke="#000" stroke-width="1.0" fill="none"/><circle cx="137.81" cy="80.06" r="3.4" fill="#4a4a4a" stroke="#000" stroke-width="0.8"/><polygon points="197.81,47.63 216.56,41.44 216.56,47.44 197.81,53.44" fill="#0a0a90"/><polygon points="216.19,33.75 228.56,40.31 216.19,53.44" fill="#0a0a90"/><polygon points="21.56,107.81 40.88,101.44 40.88,107.25 21.56,113.63" fill="#0a0a90"/><polygon points="10.88,114.38 21.56,102.56 21.56,120.19" fill="#0a0a90"/><path d="M195.56 10.88 L195.56 25.31" stroke="#000" stroke-width="1.0" fill="none"/><path d="M204.38 16.88 L204.38 30.00" stroke="#000" stroke-width="1.0" fill="none"/><path d="M193.13 12.19 L215.63 25.31" stroke="#000" stroke-width="0.9" fill="none"/><path d="M192.94 11.06 L198.19 16.31" stroke="#000" stroke-width="0.9" fill="none"/><path d="M192.56 14.06 L198.56 13.31" stroke="#000" stroke-width="0.7" fill="none"/><path d="M201.75 16.13 L207.00 21.38" stroke="#000" stroke-width="0.9" fill="none"/><path d="M201.38 19.13 L207.38 18.38" stroke="#000" stroke-width="0.7" fill="none"/><text x="208.50" y="18.75" font-family="Liberation Sans,sans-serif" font-size="13" fill="#222">t<tspan font-size="7.5" fill="#2a3050" dy="0">1</tspan></text><path d="M49.31 122.81 L49.31 141.00" stroke="#000" stroke-width="1.0" fill="none"/><path d="M56.25 124.13 L56.25 145.88" stroke="#000" stroke-width="1.0" fill="none"/><path d="M36.94 133.13 L59.63 144.38" stroke="#000" stroke-width="0.9" fill="none"/><path d="M46.69 136.69 L51.94 141.94" stroke="#000" stroke-width="0.9" fill="none"/><path d="M46.31 139.69 L52.31 138.94" stroke="#000" stroke-width="0.7" fill="none"/><path d="M53.63 140.06 L58.88 145.31" stroke="#000" stroke-width="0.9" fill="none"/><path d="M53.25 143.06 L59.25 142.31" stroke="#000" stroke-width="0.7" fill="none"/><text x="38.44" y="131.25" font-family="Liberation Sans,sans-serif" font-size="13" fill="#222">t<tspan font-size="7.5" fill="#2a3050" dy="0">2</tspan></text></g><g transform="translate(226.00,-1.00)"><polygon points="89.63,53.44 180.38,22.13 189.38,26.25 98.44,57.19" fill="#c0920a" stroke="#5f5424" stroke-width="0.7" stroke-linejoin="round"/><polygon points="89.63,53.44 98.44,57.19 98.44,75.00 89.63,75.00" fill="#bc8c0a" stroke="#5f5424" stroke-width="0.7" stroke-linejoin="round"/><polygon points="98.44,57.19 189.38,26.25 189.38,33.75 105.38,62.25" fill="#a47a0c" stroke="#5f5424" stroke-width="0.7" stroke-linejoin="round"/><polygon points="50.25,74.44 144.38,42.75 151.88,45.94 57.19,77.25" fill="#969c0a" stroke="#5f5424" stroke-width="0.7" stroke-linejoin="round"/><polygon points="50.25,74.44 57.19,77.25 57.19,125.25 50.25,122.81" fill="#949a0c" stroke="#5f5424" stroke-width="0.7" stroke-linejoin="round"/><polygon points="57.19,77.25 105.38,60.94 105.38,109.69 57.19,125.25" fill="#838604" stroke="#5f5424" stroke-width="0.7" stroke-linejoin="round"/><polygon points="105.38,61.88 196.50,30.94 205.69,34.69 113.44,65.06" fill="#c0920a" stroke="#5f5424" stroke-width="0.7" stroke-linejoin="round"/><polygon points="105.38,61.88 113.44,65.06 113.44,113.06 105.38,109.69" fill="#bc8c0a" stroke="#5f5424" stroke-width="0.7" stroke-linejoin="round"/><polygon points="113.44,65.06 205.69,34.69 205.69,82.13 113.44,113.06" fill="#987008" stroke="#5f5424" stroke-width="0.7" stroke-linejoin="round"/><path d="M126.19 85.69 L150.00 78.19" stroke="#000" stroke-width="1.0" fill="none"/><path d="M138.38 67.31 L138.38 96.00" stroke="#000" stroke-width="1.0" fill="none"/><circle cx="138.38" cy="81.94" r="3.4" fill="#4a4a4a" stroke="#000" stroke-width="0.8"/><polygon points="198.75,49.13 217.50,42.94 217.50,48.94 198.75,54.94" fill="#0a0a90"/><polygon points="217.13,35.25 229.50,41.81 217.13,54.94" fill="#0a0a90"/><polygon points="22.50,109.69 41.81,103.31 41.81,109.13 22.50,115.50" fill="#0a0a90"/><polygon points="11.81,116.25 22.50,104.44 22.50,122.06" fill="#0a0a90"/><path d="M180.38 6.56 L180.38 19.69" stroke="#000" stroke-width="1.0" fill="none"/><path d="M189.38 10.31 L189.38 24.00" stroke="#000" stroke-width="1.0" fill="none"/><path d="M196.50 13.13 L196.50 28.13" stroke="#000" stroke-width="1.0" fill="none"/><path d="M205.69 17.81 L205.69 31.88" stroke="#000" stroke-width="1.0" fill="none"/><path d="M178.13 7.50 L216.56 27.75" stroke="#000" stroke-width="0.9" fill="none"/><path d="M166.50 18.75 L177.19 18.75 L180.38 11.63" stroke="#000" stroke-width="0.9" fill="none"/><path d="M177.75 6.38 L183.00 11.63" stroke="#000" stroke-width="0.9" fill="none"/><path d="M177.38 9.38 L183.38 8.63" stroke="#000" stroke-width="0.7" fill="none"/><path d="M186.75 10.88 L192.00 16.13" stroke="#000" stroke-width="0.9" fill="none"/><path d="M186.38 13.88 L192.38 13.13" stroke="#000" stroke-width="0.7" fill="none"/><path d="M193.88 14.63 L199.13 19.88" stroke="#000" stroke-width="0.9" fill="none"/><path d="M193.50 17.63 L199.50 16.88" stroke="#000" stroke-width="0.7" fill="none"/><path d="M203.06 19.31 L208.31 24.56" stroke="#000" stroke-width="0.9" fill="none"/><path d="M202.69 22.31 L208.69 21.56" stroke="#000" stroke-width="0.7" fill="none"/><text x="167.25" y="15.38" font-family="Liberation Sans,sans-serif" font-size="13" fill="#222">t<tspan font-size="7.5" fill="#2a3050" dy="0">1</tspan></text><text x="209.06" y="20.25" font-family="Liberation Sans,sans-serif" font-size="13" fill="#222">t<tspan font-size="7.5" fill="#2a3050" dy="0">1</tspan></text><path d="M50.25 124.69 L50.25 142.13" stroke="#000" stroke-width="1.0" fill="none"/><path d="M57.19 126.00 L57.19 147.19" stroke="#000" stroke-width="1.0" fill="none"/><path d="M37.88 135.00 L60.38 145.88" stroke="#000" stroke-width="0.9" fill="none"/><path d="M47.63 138.19 L52.88 143.44" stroke="#000" stroke-width="0.9" fill="none"/><path d="M47.25 141.19 L53.25 140.44" stroke="#000" stroke-width="0.7" fill="none"/><path d="M54.56 141.75 L59.81 147.00" stroke="#000" stroke-width="0.9" fill="none"/><path d="M54.19 144.75 L60.19 144.00" stroke="#000" stroke-width="0.7" fill="none"/><text x="39.38" y="133.50" font-family="Liberation Sans,sans-serif" font-size="13" fill="#222">t<tspan font-size="7.5" fill="#2a3050" dy="0">2</tspan></text></g><g transform="translate(-4.00,144.00)"><polygon points="43.50,73.13 134.06,42.19 143.44,45.94 52.50,76.88" fill="#c0920a" stroke="#5f5424" stroke-width="0.7" stroke-linejoin="round"/><polygon points="43.50,73.13 52.50,76.88 52.50,124.69 43.50,121.50" fill="#bc8c0a" stroke="#5f5424" stroke-width="0.7" stroke-linejoin="round"/><polygon points="52.50,76.88 98.81,60.94 98.81,109.31 52.50,124.69" fill="#987008" stroke="#5f5424" stroke-width="0.7" stroke-linejoin="round"/><polygon points="98.81,60.94 192.75,30.00 192.75,78.75 98.81,110.25" fill="#505050"/><path d="M99.38 61.31 L99.38 109.88" stroke="#666" stroke-width="0.7" fill="none"/><path d="M121.31 78.38 L145.13 70.88" stroke="#000" stroke-width="1.0" fill="none"/><path d="M133.50 60.00 L133.50 88.69" stroke="#000" stroke-width="1.0" fill="none"/><circle cx="133.50" cy="74.63" r="3.4" fill="#4a4a4a" stroke="#000" stroke-width="0.8"/><polygon points="197.81,48.19 216.56,42.00 216.56,48.00 197.81,54.00" fill="#0a0a90"/><polygon points="216.19,34.31 228.56,40.88 216.19,54.00" fill="#0a0a90"/><polygon points="22.50,108.75 41.81,102.38 41.81,108.19 22.50,114.56" fill="#0a0a90"/><polygon points="11.81,115.31 22.50,103.50 22.50,121.13" fill="#0a0a90"/><path d="M191.25 14.06 L191.25 28.13" stroke="#000" stroke-width="1.0" fill="none"/><path d="M193.13 15.00 L193.13 28.13" stroke="#000" stroke-width="1.0" fill="none"/><path d="M188.44 15.00 L204.38 23.44" stroke="#000" stroke-width="0.9" fill="none"/><path d="M189.38 14.63 L194.63 19.88" stroke="#000" stroke-width="0.9" fill="none"/><path d="M189.00 17.63 L195.00 16.88" stroke="#000" stroke-width="0.7" fill="none"/><text x="197.25" y="16.50" font-family="Liberation Sans,sans-serif" font-size="13" fill="#222">t<tspan font-size="7.5" fill="#2a3050" dy="0">s</tspan></text><path d="M43.50 122.81 L43.50 142.50" stroke="#000" stroke-width="1.0" fill="none"/><path d="M52.50 127.50 L52.50 147.19" stroke="#000" stroke-width="1.0" fill="none"/><path d="M31.88 134.06 L55.31 145.31" stroke="#000" stroke-width="0.9" fill="none"/><path d="M40.88 137.06 L46.13 142.31" stroke="#000" stroke-width="0.9" fill="none"/><path d="M40.50 140.06 L46.50 139.31" stroke="#000" stroke-width="0.7" fill="none"/><path d="M49.88 141.38 L55.13 146.63" stroke="#000" stroke-width="0.9" fill="none"/><path d="M49.50 144.38 L55.50 143.63" stroke="#000" stroke-width="0.7" fill="none"/><text x="33.38" y="131.25" font-family="Liberation Sans,sans-serif" font-size="13" fill="#222">t<tspan font-size="7.5" fill="#2a3050" dy="0">1</tspan></text></g><g transform="translate(226.00,144.00)"><polygon points="42.75,70.88 129.38,40.31 137.81,44.06 50.25,74.06" fill="#c0920a" stroke="#5f5424" stroke-width="0.7" stroke-linejoin="round"/><polygon points="42.75,70.88 50.25,74.06 50.25,120.94 42.75,117.75" fill="#bc8c0a" stroke="#5f5424" stroke-width="0.7" stroke-linejoin="round"/><polygon points="50.25,74.06 137.81,44.06 186.56,29.06 186.56,75.94 52.13,122.25 50.25,121.50" fill="#505050"/><polygon points="52.13,75.00 139.69,45.00 148.69,49.13 60.38,78.38" fill="#c0920a" stroke="#5f5424" stroke-width="0.7" stroke-linejoin="round"/><polygon points="52.13,75.00 60.38,78.38 60.38,125.25 52.13,121.88" fill="#bc8c0a" stroke="#5f5424" stroke-width="0.7" stroke-linejoin="round"/><polygon points="60.38,78.38 148.69,49.13 148.69,96.00 60.38,125.25" fill="#987008" stroke="#5f5424" stroke-width="0.7" stroke-linejoin="round"/><path d="M116.25 83.44 L140.06 75.94" stroke="#000" stroke-width="1.0" fill="none"/><path d="M128.44 65.06 L128.44 93.75" stroke="#000" stroke-width="1.0" fill="none"/><circle cx="128.44" cy="79.69" r="3.4" fill="#4a4a4a" stroke="#000" stroke-width="0.8"/><polygon points="190.88,46.88 209.63,40.69 209.63,46.69 190.88,52.69" fill="#0a0a90"/><polygon points="209.25,33.00 221.63,39.56 209.25,52.69" fill="#0a0a90"/><polygon points="22.50,105.38 41.81,99.00 41.81,104.81 22.50,111.19" fill="#0a0a90"/><polygon points="11.81,111.94 22.50,100.13 22.50,117.75" fill="#0a0a90"/><path d="M184.69 13.13 L184.69 27.19" stroke="#000" stroke-width="1.0" fill="none"/><path d="M186.19 14.06 L186.19 27.19" stroke="#000" stroke-width="1.0" fill="none"/><path d="M181.50 14.06 L197.81 22.88" stroke="#000" stroke-width="0.9" fill="none"/><path d="M182.81 13.88 L188.06 19.13" stroke="#000" stroke-width="0.9" fill="none"/><path d="M182.44 16.88 L188.44 16.13" stroke="#000" stroke-width="0.7" fill="none"/><text x="190.31" y="15.38" font-family="Liberation Sans,sans-serif" font-size="13" fill="#222">t<tspan font-size="7.5" fill="#2a3050" dy="0">s</tspan></text><path d="M42.75 119.06 L42.75 137.81" stroke="#000" stroke-width="1.0" fill="none"/><path d="M50.25 122.81 L50.25 142.50" stroke="#000" stroke-width="1.0" fill="none"/><path d="M52.13 122.81 L52.13 143.44" stroke="#000" stroke-width="1.0" fill="none"/><path d="M60.38 127.50 L60.38 147.19" stroke="#000" stroke-width="1.0" fill="none"/><path d="M30.94 129.38 L72.19 150.00" stroke="#000" stroke-width="0.9" fill="none"/><path d="M40.13 132.75 L45.38 138.00" stroke="#000" stroke-width="0.9" fill="none"/><path d="M39.75 135.75 L45.75 135.00" stroke="#000" stroke-width="0.7" fill="none"/><path d="M47.63 136.50 L52.88 141.75" stroke="#000" stroke-width="0.9" fill="none"/><path d="M47.25 139.50 L53.25 138.75" stroke="#000" stroke-width="0.7" fill="none"/><path d="M49.50 137.63 L54.75 142.88" stroke="#000" stroke-width="0.9" fill="none"/><path d="M49.13 140.63 L55.13 139.88" stroke="#000" stroke-width="0.7" fill="none"/><path d="M57.75 141.75 L63.00 147.00" stroke="#000" stroke-width="0.9" fill="none"/><path d="M57.38 144.75 L63.38 144.00" stroke="#000" stroke-width="0.7" fill="none"/><text x="32.25" y="127.88" font-family="Liberation Sans,sans-serif" font-size="13" fill="#222">t<tspan font-size="7.5" fill="#2a3050" dy="0">1</tspan></text><text x="64.13" y="143.44" font-family="Liberation Sans,sans-serif" font-size="13" fill="#222">t<tspan font-size="7.5" fill="#2a3050" dy="0">1</tspan></text></g><g transform="translate(456.00,144.00)"><polygon points="90.00,55.69 181.88,24.38 183.19,24.94 183.19,74.06 90.00,105.00" fill="#474747"/><polygon points="90.00,55.69 181.88,24.38 183.19,24.94 91.31,56.25" fill="#5e5e5e"/><polygon points="43.50,73.13 134.06,42.19 143.44,45.94 52.50,76.88" fill="#c0920a" stroke="#5f5424" stroke-width="0.7" stroke-linejoin="round"/><polygon points="43.50,73.13 52.50,76.88 52.50,124.69 43.50,121.50" fill="#bc8c0a" stroke="#5f5424" stroke-width="0.7" stroke-linejoin="round"/><polygon points="52.50,76.88 98.81,60.94 98.81,109.31 52.50,124.69" fill="#987008" stroke="#5f5424" stroke-width="0.7" stroke-linejoin="round"/><polygon points="98.81,60.94 192.75,30.00 192.75,78.75 98.81,110.25" fill="#505050"/><path d="M99.38 61.31 L99.38 109.88" stroke="#666" stroke-width="0.7" fill="none"/><path d="M121.31 78.38 L145.13 70.88" stroke="#000" stroke-width="1.0" fill="none"/><path d="M133.50 60.00 L133.50 88.69" stroke="#000" stroke-width="1.0" fill="none"/><circle cx="133.50" cy="74.63" r="3.4" fill="#4a4a4a" stroke="#000" stroke-width="0.8"/><polygon points="197.81,48.19 216.56,42.00 216.56,48.00 197.81,54.00" fill="#0a0a90"/><polygon points="216.19,34.31 228.56,40.88 216.19,54.00" fill="#0a0a90"/><polygon points="22.50,108.75 41.81,102.38 41.81,108.19 22.50,114.56" fill="#0a0a90"/><polygon points="11.81,115.31 22.50,103.50 22.50,121.13" fill="#0a0a90"/><path d="M191.25 14.06 L191.25 28.13" stroke="#000" stroke-width="1.0" fill="none"/><path d="M193.13 15.00 L193.13 28.13" stroke="#000" stroke-width="1.0" fill="none"/><path d="M188.44 15.00 L204.38 23.44" stroke="#000" stroke-width="0.9" fill="none"/><path d="M189.38 14.63 L194.63 19.88" stroke="#000" stroke-width="0.9" fill="none"/><path d="M189.00 17.63 L195.00 16.88" stroke="#000" stroke-width="0.7" fill="none"/><text x="197.25" y="16.50" font-family="Liberation Sans,sans-serif" font-size="13" fill="#222">t<tspan font-size="7.5" fill="#2a3050" dy="0">s</tspan></text><path d="M180.94 8.44 L180.94 22.50" stroke="#000" stroke-width="1.0" fill="none"/><path d="M182.81 8.44 L182.81 22.50" stroke="#000" stroke-width="1.0" fill="none"/><path d="M163.13 18.38 L175.31 18.38 L180.94 11.25" stroke="#000" stroke-width="0.9" fill="none"/><path d="M179.06 9.00 L184.31 14.25" stroke="#000" stroke-width="0.9" fill="none"/><path d="M178.69 12.00 L184.69 11.25" stroke="#000" stroke-width="0.7" fill="none"/><text x="164.06" y="15.94" font-family="Liberation Sans,sans-serif" font-size="13" fill="#222">t<tspan font-size="7.5" fill="#2a3050" dy="0">s</tspan></text><path d="M43.50 122.81 L43.50 142.50" stroke="#000" stroke-width="1.0" fill="none"/><path d="M52.50 127.50 L52.50 147.19" stroke="#000" stroke-width="1.0" fill="none"/><path d="M31.88 134.06 L55.31 145.31" stroke="#000" stroke-width="0.9" fill="none"/><path d="M40.88 137.06 L46.13 142.31" stroke="#000" stroke-width="0.9" fill="none"/><path d="M40.50 140.06 L46.50 139.31" stroke="#000" stroke-width="0.7" fill="none"/><path d="M49.88 141.38 L55.13 146.63" stroke="#000" stroke-width="0.9" fill="none"/><path d="M49.50 144.38 L55.50 143.63" stroke="#000" stroke-width="0.7" fill="none"/><text x="33.38" y="131.25" font-family="Liberation Sans,sans-serif" font-size="13" fill="#222">t<tspan font-size="7.5" fill="#2a3050" dy="0">1</tspan></text></g><path d="M673.00 275.90L678.50 281.40" stroke="#999" stroke-width="2.60"/><path d="M676.80 279.70L685.70 288.60" stroke="#5c5c5c" stroke-width="4.60"/><circle cx="665.5" cy="268.4" r="10.70" fill="#fff" stroke="#999" stroke-width="3.4"/><path d="M658.50 267.40A7.50 7.50 0 0 1 664.50 261.00" stroke="#bcd8f0" stroke-width="1.4" fill="none"/></svg>
<div class="r" style="left:1px;top:31px;width:1px;height:868px;background:#dff4fd;"></div>
<div class="r" style="left:1278px;top:31px;width:1px;height:868px;background:#dff4fd;"></div>
<div class="r" style="left:1px;top:898px;width:1278px;height:1px;background:#dff4fd;"></div>
<div class="r" style="left:0px;top:31px;width:1px;height:869px;background:#2f6a9c;"></div>
<div class="r" style="left:1279px;top:31px;width:1px;height:869px;background:#2f6a9c;"></div>
<div class="r" style="left:0px;top:899px;width:1280px;height:1px;background:#2f6a9c;"></div>
</body></html>
